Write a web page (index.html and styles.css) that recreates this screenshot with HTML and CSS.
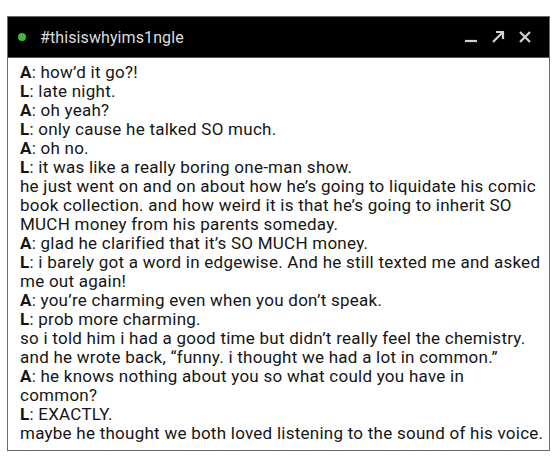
FILE: index.html
```html
<!DOCTYPE html>
<html>
<head>
<meta charset="utf-8">
<link rel="stylesheet" href="styles.css">
</head>
<body>
<div class="window">
  <div class="titlebar">
    <span class="dot"></span>
    <span class="title">#thisiswhyims1ngle</span>
    <div class="controls">
      <svg class="ctl" width="14" height="14" viewBox="0 0 14 14"><path d="M1 11H13" stroke="#d0d0d0" stroke-width="2.2"/></svg>
      <svg class="ctl" width="14" height="14" viewBox="0 0 14 14"><path d="M2 12L12 2M5 2H12V9" stroke="#d0d0d0" stroke-width="2.2" fill="none"/></svg>
      <svg class="ctl" width="14" height="14" viewBox="0 0 14 14"><path d="M2 2L12 12M12 2L2 12" stroke="#d0d0d0" stroke-width="2.2"/></svg>
    </div>
  </div>
  <div class="chat">
    <p><b>A</b>: how’d it go?!</p>
    <p><b>L</b>: late night.</p>
    <p><b>A</b>: oh yeah?</p>
    <p><b>L</b>: only cause he talked SO much.</p>
    <p><b>A</b>: oh no.</p>
    <p><b>L</b>: it was like a really boring one-man show.<br>he just went on and on about how he’s going to liquidate his comic<br>book collection. and how weird it is that he’s going to inherit SO<br>MUCH money from his parents someday.</p>
    <p><b>A</b>: glad he clarified that it’s SO MUCH money.</p>
    <p><b>L</b>: i barely got a word in edgewise. And he still texted me and asked<br>me out again!</p>
    <p><b>A</b>: you’re charming even when you don’t speak.</p>
    <p><b>L</b>: prob more charming.<br>so i told him i had a good time but didn’t really feel the chemistry.<br>and he wrote back, “funny. i thought we had a lot in common.”</p>
    <p><b>A</b>: he knows nothing about you so what could you have in<br>common?</p>
    <p><b>L</b>: EXACTLY.<br>maybe he thought we both loved listening to the sound of his voice.</p>
  </div>
</div>
</body>
</html>
```
FILE: styles.css
```css
* { box-sizing: border-box; }
html, body { margin: 0; padding: 0; background: #ffffff; }
body { padding: 16px 10px 0 7px; font-family: Roboto, "Liberation Sans", sans-serif; }
.window {
  width: 543px;
  border: 1px solid #6a6a6a;
  background: #ffffff;
}
.titlebar {
  height: 41px;
  background: #000000;
  display: flex;
  align-items: center;
  padding: 0 17px 0 10px;
  border-bottom: 1px solid #555;
}
.dot {
  width: 8px; height: 8px; border-radius: 50%;
  background: #3dbb3d;
  margin-right: 14px;
}
.title { color: #dcdcdc; font-size: 16px; letter-spacing: 0.1px; }
.controls { margin-left: auto; display: flex; gap: 13px; align-items: center; }
.ctl { display: block; }
.chat {
  padding: 5px 6px 7px 12px;
  font-size: 17px;
  letter-spacing: 0.25px;
  line-height: 19px;
  color: #151515;
}
.chat p { margin: 0; white-space: nowrap; }
.chat b { font-weight: 700; }
```
